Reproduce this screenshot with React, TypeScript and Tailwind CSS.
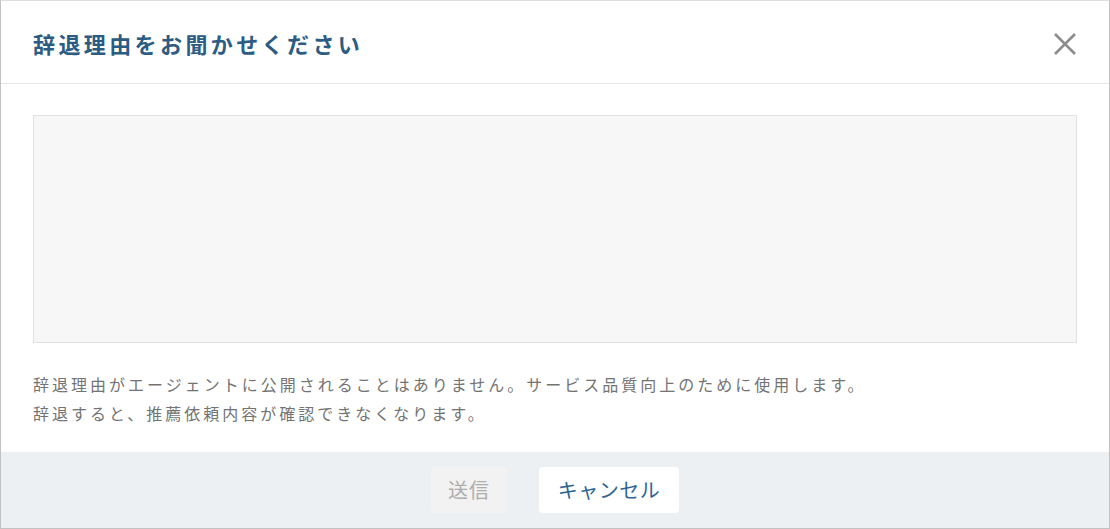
import React from "react";

export default function App() {
  const font = { fontFamily: '"Noto Sans CJK JP", "Noto Sans", sans-serif' };
  return (
    <div
      className="w-[1110px] h-[529px] bg-white border border-[#c2c2c2] border-t-[#dedede] flex flex-col overflow-hidden"
      style={font}
    >
      <div className="h-[83px] shrink-0 border-b border-[#e6e6e6] flex items-center justify-between pl-[32px] pr-[32px]">
        <h1 className="text-[22px] leading-none font-bold tracking-[3.4px] text-[#2c5c82] mt-[1px]">
          辞退理由をお聞かせください
        </h1>
        <button className="w-[24px] h-[24px] flex items-center justify-center mt-[4px]" aria-label="閉じる">
          <svg width="24" height="24" viewBox="0 0 24 24" fill="none">
            <path d="M2 2 L22 22 M22 2 L2 22" stroke="#8c8c8c" strokeWidth="2.6" strokeLinecap="butt" />
          </svg>
        </button>
      </div>
      <div className="flex-1 px-[32px] pt-[31px]">
        <textarea className="block w-full h-[228px] bg-[#f7f7f7] border border-[#e2e2e2] resize-none outline-none" />
        <div className="mt-[27px] text-[16px] leading-[29px] tracking-[3px] text-[#737373]">
          <p>辞退理由がエージェントに公開されることはありません。サービス品質向上のために使用します。</p>
          <p>辞退すると、推薦依頼内容が確認できなくなります。</p>
        </div>
      </div>
      <div className="h-[76px] shrink-0 bg-[#edf0f3] flex items-center justify-center gap-[32px]">
        <button className="w-[76px] h-[46px] rounded-[4px] bg-[#f2f2f2] text-[20px] tracking-[1px] text-[#adadad]">
          送信
        </button>
        <button className="w-[140px] h-[46px] rounded-[4px] bg-white text-[20px] tracking-[0.5px] text-[#2c6593]">
          キャンセル
        </button>
      </div>
    </div>
  );
}
